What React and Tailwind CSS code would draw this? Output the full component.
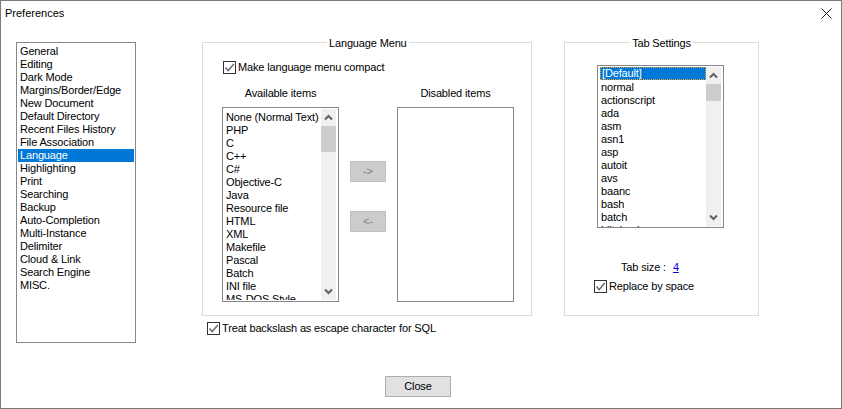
import React from "react";

const categories = [
  "General", "Editing", "Dark Mode", "Margins/Border/Edge", "New Document", "Default Directory",
  "Recent Files History", "File Association", "Language", "Highlighting", "Print", "Searching",
  "Backup", "Auto-Completion", "Multi-Instance", "Delimiter", "Cloud & Link", "Search Engine", "MISC.",
];
const languages = [
  "None (Normal Text)", "PHP", "C", "C++", "C#", "Objective-C", "Java", "Resource file", "HTML",
  "XML", "Makefile", "Pascal", "Batch", "INI file", "MS-DOS Style",
];
const tabLangs = [
  "normal", "actionscript", "ada", "asm", "asn1", "asp", "autoit", "avs", "baanc", "bash", "batch", "blitzbasic",
];

function Check({ label, className = "" }) {
  return (
    <div className={"flex items-center gap-[2px] " + className}>
      <span className="w-[13px] h-[13px] border border-[#333333] bg-white flex items-center justify-center">
        <svg width="11" height="11" viewBox="0 0 11 11" fill="none">
          <path d="M1.5 5.5 L4.2 8.5 L9.8 2" stroke="#6e6e6e" strokeWidth="1.5" />
        </svg>
      </span>
      <span>{label}</span>
    </div>
  );
}

function Scrollbar({ thumbHeight, className = "" }) {
  return (
    <div className={"w-[15px] bg-[#f0f0f0] flex flex-col justify-between shrink-0 " + className}>
      <div>
        <div className="h-[17px] flex items-center justify-center">
          <svg width="9" height="7" viewBox="0 0 9 7" fill="none">
            <path d="M1 5.5 L4.5 2 L8 5.5" stroke="#606060" strokeWidth="2" />
          </svg>
        </div>
        <div className="bg-[#cdcdcd]" style={{ height: thumbHeight }} />
      </div>
      <div className="h-[17px] flex items-center justify-center">
        <svg width="9" height="7" viewBox="0 0 9 7" fill="none">
          <path d="M1 1.5 L4.5 5 L8 1.5" stroke="#606060" strokeWidth="2" />
        </svg>
      </div>
    </div>
  );
}

function ArrowButton({ children }) {
  return (
    <button className="w-[36px] h-[21px] bg-[#cccccc] border border-[#bfbfbf] text-[#7f7f7f] flex items-center justify-center">
      {children}
    </button>
  );
}

export default function App() {
  return (
    <div className="w-[842px] h-[409px] bg-white border border-[#7a7a7a] flex flex-col text-black text-[11px] leading-[13px] tracking-[-0.15px] font-['Liberation_Sans',sans-serif] overflow-hidden">
      <div className="h-[41px] shrink-0 flex justify-between pl-[4px] pr-[9px] pt-[5px]">
        <span className="leading-[15px] tracking-normal">Preferences</span>
        <svg width="11" height="11" viewBox="0 0 11 11" className="mt-[2px]">
          <path d="M0.5 0.5 L10.5 10.5 M10.5 0.5 L0.5 10.5" stroke="#222222" strokeWidth="1" />
        </svg>
      </div>

      <div className="flex pl-[15px] items-start">
        <div className="w-[120px] h-[301px] border border-[#828790] px-px pt-[2px] shrink-0">
          {categories.map((c) => (
            <div key={c} className={"h-[13px] pl-[2px] whitespace-nowrap " + (c === "Language" ? "bg-[#0078d7] text-white" : "")}>
              {c}
            </div>
          ))}
        </div>

        <div className="ml-[66px] w-[330px] shrink-0">
          <fieldset className="h-[281px] min-w-0 w-[330px] border border-[#dcdcdc] pl-[19px] -mt-[7px]">
            <legend className="ml-[105px] px-[2px] pt-[2px]">Language Menu</legend>
            <Check label="Make language menu compact" className="mt-[11px] ml-px" />
            <div className="flex mt-[13px]">
              <div className="w-[117px] shrink-0">
                <div className="text-center h-[20px]">Available items</div>
                <div className="h-[195px] border border-[#828790] flex pr-[2px] py-px">
                  <div className="flex-1 min-w-0 overflow-hidden pl-[3px] pt-[2px]">
                    {languages.map((l) => (
                      <div key={l} className="h-[13px] whitespace-nowrap">{l}</div>
                    ))}
                  </div>
                  <Scrollbar thumbHeight={26} />
                </div>
              </div>
              <div className="w-[58px] shrink-0 flex flex-col items-center gap-[29px] pt-[74px]">
                <ArrowButton>-&gt;</ArrowButton>
                <ArrowButton>&lt;-</ArrowButton>
              </div>
              <div className="w-[117px] shrink-0">
                <div className="text-center h-[20px]">Disabled items</div>
                <div className="h-[195px] border border-[#828790]" />
              </div>
            </div>
          </fieldset>
          <Check label="Treat backslash as escape character for SQL" className="ml-[5px] mt-[6px]" />
        </div>

        <fieldset className="ml-[32px] w-[195px] min-w-0 h-[281px] -mt-[7px] border border-[#dcdcdc] shrink-0">
          <legend className="mx-auto px-[2px] pt-[2px]">Tab Settings</legend>
          <div className="w-[127px] h-[163px] ml-[32px] mt-[15px] border border-[#828790] flex pl-px pt-px pr-[2px]">
            <div className="flex-1 min-w-0 overflow-hidden pl-px">
              <div className="h-[14px]">
                <div className="h-[13px] bg-[#0078d7] text-white border border-dotted border-[#f0a030] pl-px leading-[11px]">[Default]</div>
              </div>
              {tabLangs.map((l) => (
                <div key={l} className="h-[13px] pl-px whitespace-nowrap">{l}</div>
              ))}
            </div>
            <Scrollbar thumbHeight={17} className="mb-px" />
          </div>
          <div className="mt-[33px] pl-[56px]">
            Tab size : <span className="ml-[4px] text-[#0000ee] underline">4</span>
          </div>
          <Check label="Replace by space" className="ml-[29px] mt-[6px]" />
        </fieldset>
      </div>

      <div className="flex justify-center mt-[33px] pr-[6px]">
        <button className="w-[66px] h-[21px] bg-[#e1e1e1] border border-[#adadad] text-center">Close</button>
      </div>
    </div>
  );
}
